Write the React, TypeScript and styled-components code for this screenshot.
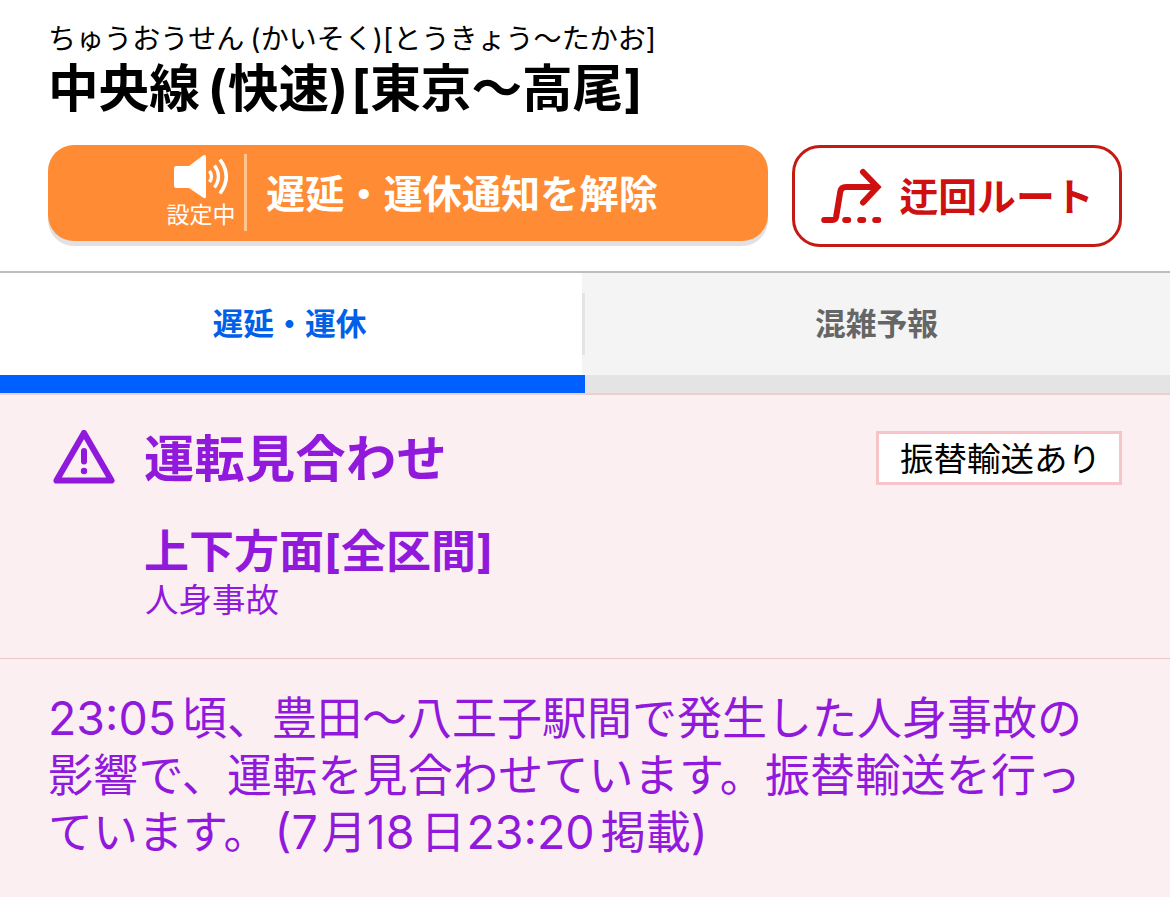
import { FC, ReactNode } from "react"
import styled, { createGlobalStyle, css } from "styled-components"

const COLORS = {
  purple: "#9019dc",
  red: "#cf1010",
  blue: "#0060e8",
  orange: "#ff8c34",
  pink: "#fceff1",
  pinkBorder: "#f6c4c9",
}

const GlobalStyle = createGlobalStyle`
  * {
    box-sizing: border-box;
  }
  body {
    margin: 0;
    background-color: #fff;
    font-family: Inter, "Noto Sans CJK JP", sans-serif;
    color: #000;
  }
  button {
    font-family: inherit;
    padding: 0;
    cursor: pointer;
  }
`

const flexCenter = css`
  display: flex;
  align-items: center;
  justify-content: center;
`
const Page = styled.div`
  width: 1170px;
  height: 900px;
  overflow: hidden;
`
// half-width run inside Japanese text
const Latin = styled.span<{ $before?: number; $after?: number }>`
  margin-left: ${({ $before = 0 }) => $before}px;
  margin-right: ${({ $after = 0 }) => $after}px;
`
/* header */
const Header = styled.header`
  height: 271px;
  padding: 20px 48px 0;
`
const Kana = styled.div`
  font-size: 28px;
  line-height: 38px;
  letter-spacing: 0.05px;
  white-space: nowrap;
`
const LineName = styled.h1`
  margin: 0;
  font-size: 50.6px;
  font-weight: 700;
  line-height: 62px;
  white-space: nowrap;
`
const Actions = styled.div`
  display: flex;
  gap: 24px;
  margin-top: 25px;
`
const NotifyButton = styled.button`
  display: flex;
  align-items: center;
  width: 720px;
  height: 96px;
  padding-left: 118px;
  border: none;
  border-radius: 26px;
  background-color: ${COLORS.orange};
  box-shadow: 0 5px 0 #e2e0e2;
  color: #fff;
`
const NotifyState = styled.span`
  display: flex;
  flex-direction: column;
  align-items: center;
  width: 81px;
  height: 77px;
  margin-bottom: 1px;
  padding-right: 8px;
  border-right: 3px solid #ffc58f;
`
const StateLabel = styled.span`
  font-size: 23px;
  line-height: 31px;
  white-space: nowrap;
`
const NotifyLabel = styled.span`
  margin-left: 19px;
  padding-bottom: 5px;
  font-size: 39.2px;
  font-weight: 700;
  white-space: nowrap;
`
const RouteButton = styled.button`
  ${flexCenter}
  gap: 17px;
  width: 330px;
  height: 102px;
  border: 3px solid #c41a14;
  border-radius: 28px;
  background-color: #fff;
  color: ${COLORS.red};
`
const RouteLabel = styled.span`
  padding-bottom: 4px;
  font-size: 38.8px;
  font-weight: 700;
  white-space: nowrap;
`
/* tabs */
const TabList = styled.div`
  display: flex;
  height: 122px;
  border-top: 2px solid #bdbdbd;
`
const TabItem = styled.div<{ $active: boolean }>`
  ${flexCenter}
  position: relative;
  width: 50%;
  padding: 0 ${({ $active }) => ($active ? 6 : 2)}px 6px 0;
  border-bottom: 18px solid ${({ $active }) => ($active ? "#005fff" : "#e4e4e4")};
  background-color: ${({ $active }) => ($active ? "#fff" : "#f4f4f4")};
  color: ${({ $active }) => ($active ? COLORS.blue : "#666")};
  font-size: 30.8px;
  font-weight: 700;
  & + *::before {
    content: "";
    position: absolute;
    left: -3px;
    top: 0;
    width: 3px;
    height: 102px;
    background: linear-gradient(#e4e4e4, #e4e4e4) 0 20px / 3px 62px no-repeat #f4f4f4;
  }
`
/* status */
const Status = styled.section`
  height: 266px;
  padding: 34px 48px 0 53px;
  border-top: 2px solid #eccfd3;
  border-bottom: 1px solid #eec4c8;
  background-color: ${COLORS.pink};
  color: ${COLORS.purple};
`
const StatusHead = styled.div`
  display: flex;
  align-items: center;
  height: 58px;
`
const StatusTitle = styled.h2`
  margin: 0 auto 0 29px;
  padding-top: 2px;
  font-size: 50.2px;
  font-weight: 700;
  letter-spacing: 0.3px;
  line-height: 54px;
`
const Badge = styled.span`
  ${flexCenter}
  width: 246px;
  height: 54px;
  padding: 0 0 4px 3px;
  border: 3px solid ${COLORS.pinkBorder};
  background-color: #fff;
  color: #000;
  font-size: 33.5px;
`
const Section = styled.h3`
  margin: 37px 0 0 91px;
  font-size: 45px;
  font-weight: 700;
  line-height: 56px;
`
const Cause = styled.p`
  margin: 0 0 0 92px;
  font-size: 33.5px;
  line-height: 40px;
`
const Detail = styled.section`
  height: 238px;
  padding: 31px 48px 0;
  background-color: ${COLORS.pink};
  color: ${COLORS.purple};
  font-size: 45px;
  line-height: 57px;
  white-space: nowrap;
  ${Latin} {
    font-size: 46.5px;
    line-height: 0;
  }
`
const DetailLine = styled.div<{ $tracking?: number }>`
  height: 57px;
  letter-spacing: ${({ $tracking = 0 }) => $tracking}px;
`

const RouteIcon: FC = () => (
  <svg width="62" height="56" viewBox="0 0 62 56" fill="none" stroke={COLORS.red} strokeLinecap="round">
    <path d="M3.2 52H11.5Q14.5 52 15.1 49L19.3 23.5Q20.1 19 25 19H55" strokeWidth="6" strokeLinejoin="round" />
    <path d="M42 4L56.5 19L42 34.5" strokeWidth="6" strokeLinejoin="miter" />
    <path d="M24.2 52H27.2M39.2 52H42.2M54.2 52H57.2" strokeWidth="6" />
  </svg>
)

const SpeakerIcon: FC = () => (
  <svg width="56" height="46" viewBox="-1 0 56 46" fill="none" stroke="#fff">
    <path
      d="M2.5 12H15L29 1.5Q32 0 32 3V42.5Q32 45.5 29 43.5L15 34H2.5Q0 34 0 31.5V14.5Q0 12 2.5 12Z"
      fill="#fff"
      stroke="none"
    />
    <path d="M35.5 17Q39.5 22.5 35.5 28" strokeWidth="3.4" />
    <path d="M40.5 11.5Q48.5 22.5 40.5 33.5" strokeWidth="3.4" />
    <path d="M46 5.5Q58.5 22.5 46 39.5" strokeWidth="3.6" />
  </svg>
)

const WarningIcon: FC = () => (
  <svg width="62" height="56" viewBox="0 1 62 56" fill="none" stroke={COLORS.purple} strokeLinecap="round">
    <path d="M31 4L58.5 51.5H3.5Z" strokeWidth="6.2" strokeLinejoin="round" />
    <path d="M31 22V32.5" strokeWidth="6" />
    <circle cx="31" cy="42" r="3.2" fill={COLORS.purple} stroke="none" />
  </svg>
)

type TabProps = {
  active?: boolean
  children: ReactNode
}

const Tab: FC<TabProps> = ({ active = false, children }) => (
  <TabItem $active={active} role="tab" aria-selected={active}>
    {children}
  </TabItem>
)

const App: FC = () => {
  return (
    <>
      <GlobalStyle />
      <Page>
        <Header>
          <Kana>
            ちゅうおうせん<Latin $before={6}>(</Latin>かいそく<Latin>)[</Latin>とうきょう～たかお<Latin>]</Latin>
          </Kana>
          <LineName>
            中央線<Latin $before={8} $after={1}>(</Latin>快速<Latin $after={3}>)</Latin>
            <Latin>[</Latin>東京～高尾<Latin>]</Latin>
          </LineName>
          <Actions>
            <NotifyButton>
              <NotifyState>
                <SpeakerIcon />
                <StateLabel>設定中</StateLabel>
              </NotifyState>
              <NotifyLabel>遅延・運休通知を解除</NotifyLabel>
            </NotifyButton>
            <RouteButton>
              <RouteIcon />
              <RouteLabel>迂回ルート</RouteLabel>
            </RouteButton>
          </Actions>
        </Header>
        <TabList role="tablist">
          <Tab active>遅延・運休</Tab>
          <Tab>混雑予報</Tab>
        </TabList>
        <Status>
          <StatusHead>
            <WarningIcon />
            <StatusTitle>運転見合わせ</StatusTitle>
            <Badge>振替輸送あり</Badge>
          </StatusHead>
          <Section>
            上下方面<Latin>[</Latin>全区間<Latin>]</Latin>
          </Section>
          <Cause>人身事故</Cause>
        </Status>
        <Detail>
          <DetailLine>
            <Latin $after={6}>23:05</Latin>頃、豊田～八王子駅間で発生した人身事故の
          </DetailLine>
          <DetailLine $tracking={0.2}>影響で、運転を見合わせています。振替輸送を行っ</DetailLine>
          <DetailLine>
            ています。<Latin $before={6} $after={4}>(7</Latin>月<Latin $after={6}>18</Latin>日
            <Latin $before={1} $after={6}>23:20</Latin>掲載<Latin>)</Latin>
          </DetailLine>
        </Detail>
      </Page>
    </>
  )
}
export default App
